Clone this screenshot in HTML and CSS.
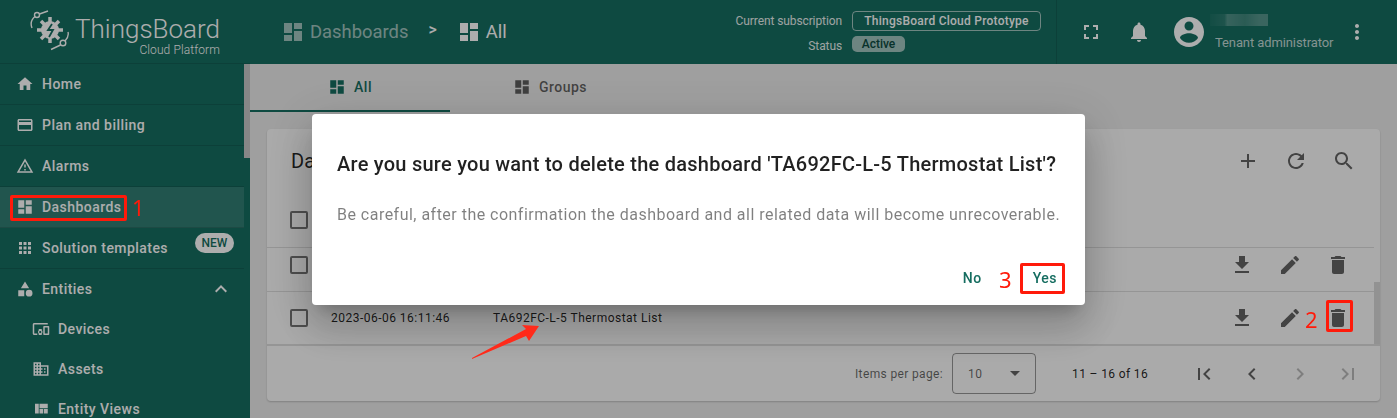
FILE: index.html
```html
<!DOCTYPE html>
<html lang="en">
<head>
    <meta charset="UTF-8">
    <title>ThingsBoard Dashboards</title>
    <link rel="stylesheet" href="styles.css">
</head>
<body>
    <svg class="defs" width="0" height="0">
        <symbol id="i-home" viewBox="0 0 24 24"><path d="M10 20v-6h4v6h5v-8h3L12 3 2 12h3v8z"/></symbol>
        <symbol id="i-card" viewBox="0 0 24 24"><path d="M20 4H4c-1.11 0-1.99.89-1.99 2L2 18c0 1.11.89 2 2 2h16c1.11 0 2-.89 2-2V6c0-1.11-.89-2-2-2zm0 14H4v-6h16v6zm0-10H4V6h16v2z"/></symbol>
        <symbol id="i-warn" viewBox="0 0 24 24"><path d="M12 5.99L19.53 19H4.47L12 5.99M12 2L1 21h22L12 2zm1 14h-2v2h2v-2zm0-6h-2v4h2v-4z"/></symbol>
        <symbol id="i-dash" viewBox="0 0 24 24"><path d="M3 13h8V3H3v10zm0 8h8v-6H3v6zm10 0h8V11h-8v10zm0-18v6h8V3h-8z"/></symbol>
        <symbol id="i-apps" viewBox="0 0 24 24"><path d="M4 8h4V4H4v4zm6 12h4v-4h-4v4zm-6 0h4v-4H4v4zm0-6h4v-4H4v4zm6 0h4v-4h-4v4zm6-10v4h4V4h-4zm-6 4h4V4h-4v4zm6 6h4v-4h-4v4zm0 6h4v-4h-4v4z"/></symbol>
        <symbol id="i-cat" viewBox="0 0 24 24"><path d="M12 2l-5.5 9h11zM17.5 13a4.5 4.5 0 1 0 0 9a4.5 4.5 0 1 0 0-9M3 13.5h8v8H3z"/></symbol>
        <symbol id="i-less" viewBox="0 0 24 24"><path d="M12 8l-6 6 1.41 1.41L12 10.83l4.59 4.58L18 14z"/></symbol>
        <symbol id="i-devices" viewBox="0 0 24 24"><path d="M3 6h18V4H3c-1.1 0-2 .9-2 2v12c0 1.1.9 2 2 2h4v-2H3V6zm10 6H9v1.78c-.61.55-1 1.33-1 2.22s.39 1.67 1 2.22V20h4v-1.78c.61-.55 1-1.34 1-2.22s-.39-1.67-1-2.22V12zm-2 5.5c-.83 0-1.5-.67-1.5-1.5s.67-1.5 1.5-1.5 1.5.67 1.5 1.5-.67 1.5-1.5 1.5zM22 8h-6c-.5 0-1 .5-1 1v10c0 .5.5 1 1 1h6c.5 0 1-.5 1-1V9c0-.5-.5-1-1-1zm-1 10h-4v-8h4v8z"/></symbol>
        <symbol id="i-domain" viewBox="0 0 24 24"><path d="M12 7V3H2v18h20V7H12zM6 19H4v-2h2v2zm0-4H4v-2h2v2zm0-4H4V9h2v2zm0-4H4V5h2v2zm4 12H8v-2h2v2zm0-4H8v-2h2v2zm0-4H8V9h2v2zm0-4H8V5h2v2zm10 12h-8v-2h2v-2h-2v-2h2v-2h-2V9h8v10zm-2-8h-2v2h2v-2zm0 4h-2v2h2v-2z"/></symbol>
        <symbol id="i-quilt" viewBox="0 0 24 24"><path d="M10 18h5v-6h-5v6zm-6 0h5V5H4v13zm12 0h5v-6h-5v6zM10 5v6h11V5H10z"/></symbol>
        <symbol id="i-full" viewBox="0 0 24 24"><path d="M7 14H5v5h5v-2H7v-3zm-2-4h2V7h3V5H5v5zm12 7h-3v2h5v-5h-2v3zM14 5v2h3v3h2V5h-5z"/></symbol>
        <symbol id="i-bell" viewBox="0 0 24 24"><path d="M12 22c1.1 0 2-.9 2-2h-4c0 1.1.89 2 2 2zm6-6v-5c0-3.07-1.64-5.64-4.5-6.32V4c0-.83-.67-1.5-1.5-1.5s-1.5.67-1.5 1.5v.68C7.63 5.36 6 7.92 6 11v5l-2 2v1h16v-1l-2-2z"/></symbol>
        <symbol id="i-user" viewBox="0 0 24 24"><path d="M12 2C6.48 2 2 6.48 2 12s4.48 10 10 10 10-4.48 10-10S17.52 2 12 2zm0 3c1.66 0 3 1.34 3 3s-1.34 3-3 3-3-1.34-3-3 1.34-3 3-3zm0 14.2c-2.5 0-4.71-1.28-6-3.22.03-1.99 4-3.08 6-3.08 1.99 0 5.97 1.09 6 3.08-1.29 1.94-3.5 3.22-6 3.22z"/></symbol>
        <symbol id="i-more" viewBox="0 0 24 24"><path d="M12 8c1.1 0 2-.9 2-2s-.9-2-2-2-2 .9-2 2 .9 2 2 2zm0 2c-1.1 0-2 .9-2 2s.9 2 2 2 2-.9 2-2-.9-2-2-2zm0 6c-1.1 0-2 .9-2 2s.9 2 2 2 2-.9 2-2-.9-2-2-2z"/></symbol>
        <symbol id="i-add" viewBox="0 0 24 24"><path d="M19 13h-6v6h-2v-6H5v-2h6V5h2v6h6v2z"/></symbol>
        <symbol id="i-refresh" viewBox="0 0 24 24"><path d="M17.65 6.35C16.2 4.9 14.21 4 12 4c-4.42 0-7.99 3.58-7.99 8s3.57 8 7.99 8c3.73 0 6.84-2.55 7.73-6h-2.08c-.82 2.33-3.04 4-5.65 4-3.31 0-6-2.69-6-6s2.69-6 6-6c1.66 0 3.14.69 4.22 1.78L13 11h7V4l-2.35 2.35z"/></symbol>
        <symbol id="i-search" viewBox="0 0 24 24"><path d="M15.5 14h-.79l-.28-.27C15.41 12.59 16 11.11 16 9.5 16 5.91 13.09 3 9.5 3S3 5.91 3 9.5 5.91 16 9.5 16c1.61 0 3.09-.59 4.23-1.57l.27.28v.79l5 4.99L20.49 19l-4.99-5zm-6 0C7.01 14 5 11.99 5 9.5S7.01 5 9.5 5 14 7.01 14 9.5 11.99 14 9.5 14z"/></symbol>
        <symbol id="i-down" viewBox="0 0 24 24"><path d="M19 9h-4V3H9v6H5l7 7 7-7zM5 18v2h14v-2H5z"/></symbol>
        <symbol id="i-edit" viewBox="0 0 24 24"><path d="M3 17.25V21h3.75L17.81 9.94l-3.75-3.75L3 17.25zM20.71 7.04c.39-.39.39-1.02 0-1.41l-2.34-2.34c-.39-.39-1.02-.39-1.41 0l-1.83 1.83 3.75 3.75 1.83-1.83z"/></symbol>
        <symbol id="i-del" viewBox="0 0 24 24"><path d="M6 19c0 1.1.9 2 2 2h8c1.1 0 2-.9 2-2V7H6v12zM19 4h-3.5l-1-1h-5l-1 1H5v2h14V4z"/></symbol>
        <symbol id="i-first" viewBox="0 0 24 24"><path d="M18.41 16.59L13.82 12l4.59-4.59L17 6l-6 6 6 6zM6 6h2v12H6z"/></symbol>
        <symbol id="i-prev" viewBox="0 0 24 24"><path d="M15.41 7.41L14 6l-6 6 6 6 1.41-1.41L10.83 12z"/></symbol>
        <symbol id="i-next" viewBox="0 0 24 24"><path d="M10 6L8.59 7.41 13.17 12l-4.58 4.59L10 18l6-6z"/></symbol>
        <symbol id="i-last" viewBox="0 0 24 24"><path d="M5.59 7.41L10.18 12l-4.59 4.59L7 18l6-6-6-6zM16 6h2v12h-2z"/></symbol>
    </svg>

    <div class="app">
        <aside class="sidebar">
            <div class="logo">
                <svg class="logo-mark" viewBox="0 0 42 42">
                    <circle cx="21" cy="20" r="9" fill="#fff"/>
                    <path d="M21 7v26M8 20h26M12 11l18 18M30 11L12 29" stroke="#fff" stroke-width="3.500" fill="none"/>
                    <path d="M23 14l-4 6h5l-4 7" stroke="#156d60" stroke-width="1.800" fill="none"/>
                    <path d="M3 18C1 13 3 9 6 6.500M10.500 4L19 1M39 22c1 4-1 7-3 9M31.500 35L22 39.500" stroke="#fff" stroke-width="1.400" fill="none"/>
                    <circle cx="8" cy="5" r="2.500" fill="none" stroke="#fff" stroke-width="1.400"/>
                    <circle cx="34" cy="33" r="2.800" fill="none" stroke="#fff" stroke-width="1.400"/>
                </svg>
                <div class="logo-text">
                    <div class="logo-name">ThingsBoard</div>
                    <div class="logo-sub">Cloud Platform</div>
                </div>
            </div>
            <div class="side-body">
                <nav class="nav">
                    <a class="nav-item"><svg class="ic"><use href="#i-home"/></svg>Home</a>
                    <a class="nav-item"><svg class="ic"><use href="#i-card"/></svg>Plan and billing</a>
                    <a class="nav-item"><svg class="ic"><use href="#i-warn"/></svg>Alarms</a>
                    <a class="nav-item active"><svg class="ic"><use href="#i-dash"/></svg>Dashboards</a>
                    <a class="nav-item"><svg class="ic"><use href="#i-apps"/></svg>Solution templates<span class="new-chip">NEW</span></a>
                    <a class="nav-item open"><svg class="ic"><use href="#i-cat"/></svg>Entities<svg class="ic caret"><use href="#i-less"/></svg></a>
                    <a class="nav-sub"><svg class="ic"><use href="#i-devices"/></svg>Devices</a>
                    <a class="nav-sub"><svg class="ic"><use href="#i-domain"/></svg>Assets</a>
                    <a class="nav-sub"><svg class="ic"><use href="#i-quilt"/></svg>Entity Views</a>
                </nav>
                <div class="side-scroll"><div class="side-thumb"></div></div>
            </div>
        </aside>

        <div class="main">
            <header class="topbar">
                <div class="crumbs">
                    <svg class="ic crumb-ic dim"><use href="#i-dash"/></svg>
                    <span class="crumb dim">Dashboards</span>
                    <span class="crumb-sep">&gt;</span>
                    <svg class="ic crumb-ic"><use href="#i-dash"/></svg>
                    <span class="crumb">All</span>
                </div>
                <div class="subscription">
                    <div class="sub-labels">
                        <span>Current subscription</span>
                        <span>Status</span>
                    </div>
                    <div class="sub-values">
                        <span class="plan-chip">ThingsBoard Cloud Prototype</span>
                        <span class="status-chip">Active</span>
                    </div>
                </div>
                <div class="top-actions">
                    <svg class="ic top-ic"><use href="#i-full"/></svg>
                    <svg class="ic top-ic bell"><use href="#i-bell"/></svg>
                    <svg class="ic avatar"><use href="#i-user"/></svg>
                    <div class="user">
                        <div class="user-name"></div>
                        <div class="user-role">Tenant administrator</div>
                    </div>
                    <svg class="ic top-ic more"><use href="#i-more"/></svg>
                </div>
            </header>

            <div class="tabs">
                <div class="tab selected"><svg class="ic"><use href="#i-dash"/></svg>All</div>
                <div class="tab"><svg class="ic"><use href="#i-dash"/></svg>Groups</div>
            </div>

            <div class="content">
                <section class="card">
                    <div class="toolbar">
                        <h2 class="card-title">Da</h2>
                        <div class="tool-icons">
                            <svg class="ic tool"><use href="#i-add"/></svg>
                            <svg class="ic tool"><use href="#i-refresh"/></svg>
                            <svg class="ic tool"><use href="#i-search"/></svg>
                        </div>
                    </div>
                    <div class="table-wrap">
                        <div class="table">
                            <div class="row head"><span class="check"></span></div>
                            <div class="row short">
                                <span class="check"></span>
                                <div class="row-actions">
                                    <svg class="ic tool"><use href="#i-down"/></svg>
                                    <svg class="ic tool"><use href="#i-edit"/></svg>
                                    <svg class="ic tool"><use href="#i-del"/></svg>
                                </div>
                            </div>
                            <div class="row tall">
                                <span class="check"></span>
                                <span class="cell-time">2023-06-06 16:11:46</span>
                                <span class="cell-name">TA692FC-L-5 Thermostat List</span>
                                <div class="row-actions">
                                    <svg class="ic tool"><use href="#i-down"/></svg>
                                    <svg class="ic tool"><use href="#i-edit"/></svg>
                                    <svg class="ic tool"><use href="#i-del"/></svg>
                                </div>
                            </div>
                        </div>
                        <div class="table-scroll"><div class="table-thumb"></div></div>
                    </div>
                    <div class="paginator">
                        <span class="page-label">Items per page:</span>
                        <div class="page-select"><span>10</span><i class="select-arrow"></i></div>
                        <span class="page-range">11 – 16 of 16</span>
                        <div class="page-nav">
                            <svg class="ic tool"><use href="#i-first"/></svg>
                            <svg class="ic tool"><use href="#i-prev"/></svg>
                            <svg class="ic tool off"><use href="#i-next"/></svg>
                            <svg class="ic tool off"><use href="#i-last"/></svg>
                        </div>
                    </div>
                </section>
            </div>
        </div>
    </div>

    <div class="scrim">
        <div class="dialog">
            <h1 class="dialog-title">Are you sure you want to delete the dashboard 'TA692FC-L-5 Thermostat List'?</h1>
            <p class="dialog-text">Be careful, after the confirmation the dashboard and all related data will become unrecoverable.</p>
            <div class="dialog-actions">
                <button type="button" class="btn">No</button>
                <button type="button" class="btn">Yes</button>
            </div>
        </div>
    </div>

    <!-- red markup drawn on top of the screenshot -->
    <div class="mark box-dash"></div>
    <span class="mark num num-1">1</span>
    <div class="mark box-del"></div>
    <span class="mark num num-2">2</span>
    <div class="mark box-yes"></div>
    <span class="mark num num-3">3</span>
    <svg class="mark arrow" width="80" height="45" viewBox="0 0 80 45">
        <path d="M1 38L55 9 51 5 68 6 58 21 55 16 1 39z" fill="#ff2a1a"/>
    </svg>
</body>
</html>
```

FILE: styles.css
```css
* {
    box-sizing: border-box;
}
html, body {
    margin: 0;
    height: 100%;
    overflow: hidden;
}
body {
    font-family: Roboto, "Liberation Sans", sans-serif;
    font-size: 14px;
    color: rgba(0, 0, 0, 0.87);
    background: #ebebeb;
}
.defs {
    display: block;
    height: 0;
}
.ic {
    width: 24px;
    height: 24px;
    fill: currentColor;
    flex: none;
}
.app {
    display: flex;
    height: 418px;
}

/* sidebar */
.sidebar {
    width: 250px;
    flex: none;
    background: #156d60;
    color: #fff;
    display: flex;
    flex-direction: column;
    overflow: hidden;
}
.logo {
    height: 64px;
    flex: none;
    display: flex;
    align-items: flex-start;
    padding: 10px 0 0 29px;
    border-bottom: 1px solid rgba(0, 0, 0, 0.12);
    color: #fff;
}
.logo-mark {
    width: 42px;
    height: 42px;
    flex: none;
}
.logo-text {
    margin-left: 4px;
    text-align: right;
}
.logo-name {
    font-size: 26px;
    font-weight: 300;
    line-height: 32px;
    margin-top: 3px;
}
.logo-sub {
    font-size: 12px;
    font-weight: 300;
    letter-spacing: 0.1px;
    line-height: 13px;
    margin-top: -1px;
}
.side-body {
    flex: 1;
    display: flex;
    min-height: 0;
}
.nav {
    width: 244px;
    flex: none;
}
.nav-item {
    height: 41px;
    display: flex;
    align-items: center;
    padding-left: 16px;
    font-weight: 500;
    letter-spacing: 0.45px;
    border-bottom: 1px solid rgba(0, 0, 0, 0.12);
}
.nav-item .ic {
    width: 18px;
    height: 18px;
    margin-right: 8px;
}
.nav-item.active {
    background: rgba(255, 255, 255, 0.12);
}
.nav-item.open {
    height: 40px;
    border-bottom: 0;
}
.nav-item .caret {
    width: 24px;
    height: 24px;
    margin: 0 0 0 auto;
    position: relative;
    left: -11px;
}
.nav-sub {
    height: 40px;
    display: flex;
    align-items: center;
    padding-left: 32px;
    font-weight: 500;
    letter-spacing: 0.45px;
}
.nav-sub .ic {
    width: 18px;
    height: 18px;
    margin-right: 8px;
}
.new-chip {
    margin: 0 10px 0 auto;
    width: 39px;
    height: 20px;
    position: relative;
    top: -5px;
    border-radius: 10px;
    background: #fff;
    color: #156d60;
    font-size: 12px;
    line-height: 20px;
    text-align: center;
    letter-spacing: 0;
}
.side-scroll {
    width: 6px;
    flex: none;
}
.side-thumb {
    height: 94px;
    background: #c6c6c6;
}

/* top bar */
.main {
    flex: 1;
    min-width: 0;
    display: flex;
    flex-direction: column;
}
.topbar {
    height: 64px;
    flex: none;
    background: #156d60;
    color: #fff;
    display: flex;
    align-items: center;
    padding-left: 32px;
}
.crumbs {
    display: flex;
    align-items: center;
    font-size: 18.400px;
    height: 64px;
}
.crumb-ic {
    margin-left: -1px;
    margin-right: 5px;
}
.crumb {
    line-height: 64px;
}
.dim {
    opacity: 0.6;
}
.crumb-sep {
    font-size: 16px;
    font-weight: 500;
    margin: -6px 21px 0 20px;
}
.subscription {
    margin-left: auto;
    display: flex;
    font-size: 12px;
}
.sub-labels {
    display: flex;
    flex-direction: column;
    align-items: flex-end;
    opacity: 0.9;
    padding-top: 3px;
    gap: 11px;
    line-height: 14px;
    letter-spacing: -0.1px;
}
.sub-values {
    display: flex;
    flex-direction: column;
    align-items: flex-start;
    margin-left: 10px;
    gap: 5px;
}
.plan-chip {
    height: 20px;
    width: 189px;
    border: 1px solid rgba(255, 255, 255, 0.6);
    border-radius: 4px;
    text-align: center;
    font-weight: 500;
    letter-spacing: 0.25px;
    line-height: 18px;
}
.status-chip {
    height: 16px;
    width: 53px;
    border-radius: 5px;
    background: rgba(255, 255, 255, 0.6);
    color: #0c4a40;
    text-align: center;
    font-weight: 500;
    line-height: 16px;
}
.top-actions {
    height: 64px;
    margin-left: 15px;
    width: 341px;
    flex: none;
    border-left: 1px solid rgba(0, 0, 0, 0.12);
    display: flex;
    align-items: center;
    padding-left: 22px;
}
.top-ic {
    margin-right: 24px;
}
.avatar {
    width: 36px;
    height: 36px;
    margin: 0 8px 0 -4px;
}
.user {
    width: 134px;
}
.user-name {
    width: 58px;
    height: 12px;
    margin: 0 0 9px -5px;
    background: linear-gradient(90deg, rgba(255, 255, 255, 0.03), rgba(255, 255, 255, 0.1) 25%, rgba(255, 255, 255, 0.26) 30%, rgba(255, 255, 255, 0.18) 60%, rgba(255, 255, 255, 0.28) 85%);
}
.user-role {
    font-size: 13px;
    letter-spacing: -0.1px;
    color: rgba(255, 255, 255, 0.75);
    line-height: 16px;
    white-space: nowrap;
}
.more {
    margin: 0 0 0 -4px;
}

/* tabs */
.tabs {
    height: 48px;
    flex: none;
    display: flex;
}
.tab {
    width: 200px;
    display: flex;
    align-items: center;
    justify-content: center;
    font-weight: 500;
    letter-spacing: 0.5px;
    color: rgba(0, 0, 0, 0.6);
    border-bottom: 2px solid transparent;
}
.tab .ic {
    width: 18px;
    height: 18px;
    margin-right: 8px;
}
.tab.selected {
    color: #156d60;
    border-bottom-color: #156d60;
}

/* card */
.content {
    flex: 1;
    min-height: 0;
    padding: 17px;
}
.card {
    height: 100%;
    background: #fbfbfb;
    border-radius: 4px;
    box-shadow: 0 1px 2px rgba(0, 0, 0, 0.2);
    display: flex;
    flex-direction: column;
    overflow: hidden;
}
.toolbar {
    height: 64px;
    flex: none;
    display: flex;
    align-items: center;
    padding: 0 24px;
}
.card-title {
    margin: 0;
    font-size: 20px;
    font-weight: 400;
}
.tool-icons {
    margin-left: auto;
    display: flex;
    gap: 24px;
    color: rgba(0, 0, 0, 0.6);
}
.tool {
    color: rgba(0, 0, 0, 0.6);
}
.table-wrap {
    height: 151px;
    flex: none;
    display: flex;
}
.table {
    flex: 1;
    min-width: 0;
}
.row {
    display: flex;
    align-items: center;
    padding-left: 23px;
    border-bottom: 1px solid rgba(0, 0, 0, 0.12);
    font-size: 12px;
    letter-spacing: 0.48px;
}
.row.head {
    height: 55px;
}
.row.short {
    height: 44px;
    padding-bottom: 10px;
}
.row.tall {
    height: 52px;
    border-bottom: 0;
}
.check {
    width: 18px;
    height: 18px;
    flex: none;
    border: 2px solid rgba(0, 0, 0, 0.54);
    border-radius: 2px;
}
.cell-time {
    margin-left: 23px;
    width: 162px;
    flex: none;
}
.row-actions {
    margin-left: auto;
    margin-right: 24px;
    display: flex;
    gap: 24px;
}
.table-scroll {
    width: 6px;
    flex: none;
    padding-top: 89px;
}
.table-thumb {
    height: 62px;
    background: #d8d8d8;
}
.paginator {
    flex: 1;
    display: flex;
    align-items: center;
    border-top: 2px solid rgba(0, 0, 0, 0.12);
    font-size: 12px;
    letter-spacing: 0.36px;
    color: rgba(0, 0, 0, 0.6);
    padding-left: 588px;
}
.page-select {
    width: 84px;
    height: 41px;
    margin-left: 9px;
    border: 1px solid rgba(0, 0, 0, 0.4);
    border-radius: 4px;
    display: flex;
    align-items: center;
    padding-left: 15px;
}
.select-arrow {
    margin-left: auto;
    margin-right: 15px;
    width: 0;
    height: 0;
    border: 5px solid transparent;
    border-top-color: rgba(0, 0, 0, 0.6);
    border-bottom: 0;
}
.page-range {
    margin-left: 36px;
    letter-spacing: 0.36px;
    color: rgba(0, 0, 0, 0.87);
}
.page-nav {
    margin-left: 44px;
    display: flex;
    gap: 24px;
}
.tool.off {
    color: rgba(0, 0, 0, 0.26);
}

/* dialog */
.scrim {
    position: fixed;
    inset: 0;
    background: rgba(0, 0, 0, 0.32);
    display: flex;
    align-items: center;
    justify-content: center;
}
.dialog {
    width: 773px;
    height: 191px;
    background: #fff;
    border-radius: 4px;
    padding: 38px 25px 0;
    box-shadow: 0 11px 15px -7px rgba(0, 0, 0, 0.2), 0 24px 38px 3px rgba(0, 0, 0, 0.14), 0 9px 46px 8px rgba(0, 0, 0, 0.12);
    display: flex;
    flex-direction: column;
}
.dialog-title {
    margin: 0;
    font-size: 20px;
    font-weight: 500;
    line-height: 24px;
    letter-spacing: 0.25px;
    white-space: nowrap;
}
.dialog-text {
    margin: 29px 0 0;
    font-size: 16px;
    line-height: 20px;
    letter-spacing: 0.48px;
    color: rgba(0, 0, 0, 0.5);
    white-space: nowrap;
}
.dialog-actions {
    margin-top: auto;
    height: 54px;
    display: flex;
    justify-content: flex-end;
    align-items: flex-start;
    padding-top: 13px;
    margin-right: 1px;
}
.btn {
    border: 0;
    background: none;
    font: 500 14px Roboto, "Liberation Sans", sans-serif;
    letter-spacing: 0.5px;
    color: #156d60;
    height: 28px;
    padding: 0;
}
.btn + .btn {
    margin-left: 51px;
    margin-right: 2px;
}

/* annotations */
.mark {
    position: fixed;
}
.box-dash, .box-del, .box-yes {
    border: 3px solid #ff1a0a;
    border-radius: 2px;
}
.box-dash {
    left: 10px;
    top: 195px;
    width: 117px;
    height: 26px;
}
.box-del {
    left: 1326px;
    top: 300px;
    width: 27px;
    height: 32px;
}
.box-yes {
    left: 1020px;
    top: 263px;
    width: 45px;
    height: 31px;
}
.num {
    color: #ff1a0a;
    font-family: "Noto Sans", sans-serif;
    font-size: 22px;
    line-height: 24px;
}
.num-1 {
    left: 132px;
    top: 195px;
}
.num-2 {
    left: 1305px;
    top: 307px;
}
.num-3 {
    left: 999px;
    top: 267px;
}
.arrow {
    left: 471px;
    top: 320px;
}
```
